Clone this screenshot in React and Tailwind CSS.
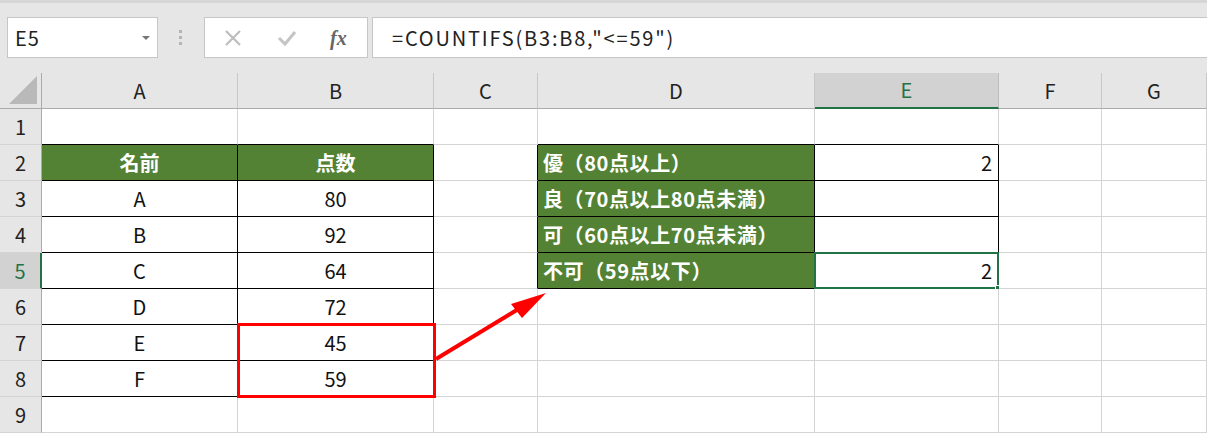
const font = "font-['Noto_Sans_CJK_JP','Noto_Sans',sans-serif]";

const cols = ["A", "B", "C", "D", "E", "F", "G"];

// cell data per row (1-based rows), keyed by column
const data = {
  2: { A: "名前", B: "点数", D: "優（80点以上）", E: "2" },
  3: { A: "A", B: "80", D: "良（70点以上80点未満）" },
  4: { A: "B", B: "92", D: "可（60点以上70点未満）" },
  5: { A: "C", B: "64", D: "不可（59点以下）", E: "2" },
  6: { A: "D", B: "72" },
  7: { A: "E", B: "45" },
  8: { A: "F", B: "59" },
};

function inTable(col, row) {
  if ((col === "A" || col === "B") && row >= 2 && row <= 8) return true;
  if ((col === "D" || col === "E") && row >= 2 && row <= 5) return true;
  return false;
}

function isGreen(col, row) {
  if ((col === "A" || col === "B") && row === 2) return true;
  if (col === "D" && row >= 2 && row <= 5) return true;
  return false;
}

function Cell({ col, row }) {
  const right = cols[cols.indexOf(col) + 1];
  const blackR = inTable(col, row) || (right && inTable(right, row));
  const blackB = inTable(col, row) || inTable(col, row + 1);
  const value = data[row]?.[col] ?? "";
  const green = isGreen(col, row);
  const selected = col === "E" && row === 5;

  let align = "justify-center";
  if (col === "D") align = "justify-start pl-[5px] tracking-[0.6px]";
  if (col === "E") align = "justify-end pr-[6px]";

  return (
    <div
      className={
        "relative flex items-center border-r border-b text-[20px] " +
        align +
        " " +
        (blackR ? "border-r-black" : "border-r-[#d4d4d4]") +
        " " +
        (blackB ? "border-b-black" : "border-b-[#d4d4d4]") +
        " " +
        (green ? "bg-[#548235] font-bold text-white" : "bg-white text-[#111]")
      }
    >
      <span className="whitespace-nowrap leading-none">{value}</span>
      {selected && (
        <>
          <div className="absolute -left-px -top-px -right-px -bottom-px border-2 border-[#217346]" />
          <div className="absolute -right-[4px] -bottom-[4px] h-[7px] w-[7px] border border-white bg-[#217346]" />
        </>
      )}
    </div>
  );
}

function Toolbar() {
  return (
    <div className="flex h-[73px] items-start border-t-[3px] border-[#d6d6d6] bg-[#e6e6e6] pl-[7px] pt-[14px]">
      <div className="flex h-[41px] w-[151px] items-center justify-between border border-[#c6c6c6] bg-white pl-[7px] pr-[7px]">
        <span className="text-[20px] tracking-[1px] text-[#222]">E5</span>
        <span className="h-0 w-0 border-x-[4px] border-t-[4px] border-x-transparent border-t-[#777]" />
      </div>
      <div className="flex h-[41px] w-[46px] flex-col items-center justify-center gap-[3px] pr-[1px]">
        <span className="h-[3px] w-[3px] bg-[#b4b4b4]" />
        <span className="h-[3px] w-[3px] bg-[#b4b4b4]" />
        <span className="h-[3px] w-[3px] bg-[#b4b4b4]" />
      </div>
      <div className="flex h-[41px] w-[164px] items-center border border-[#c6c6c6] bg-white">
        <svg width="20" height="20" viewBox="0 0 20 20" className="ml-[18px]">
          <path d="M3 3 L17 17 M17 3 L3 17" stroke="#bdbdbd" strokeWidth="2.2" fill="none" />
        </svg>
        <svg width="20" height="20" viewBox="0 0 20 20" className="ml-[34px]">
          <path d="M2 10 L8 16 L18 4" stroke="#c4c4c4" strokeWidth="3" fill="none" />
        </svg>
        <span className="ml-[33px] font-['Liberation_Serif',serif] text-[20px] font-bold italic text-[#666]">
          fx
        </span>
      </div>
      <div className="ml-[4px] flex h-[41px] flex-1 items-center border-y border-l border-[#c6c6c6] bg-white pl-[19px]">
        <span className="text-[20px] tracking-[1.8px] text-[#222]">=COUNTIFS(B3:B8,"&lt;=59")</span>
      </div>
    </div>
  );
}

export default function App() {
  const rows = [1, 2, 3, 4, 5, 6, 7, 8, 9];
  return (
    <div className={"relative h-[434px] w-[1207px] overflow-hidden bg-white " + font}>
      <Toolbar />
      <div className="grid grid-cols-[42px_196px_196px_104px_277px_184px_103px_1fr] grid-rows-[36px_repeat(9,36px)]">
        {/* corner */}
        <div className="relative border-r border-b border-[#ababab] bg-[#e6e6e6]">
          <svg className="absolute bottom-[4px] right-[4px]" width="28" height="28" viewBox="0 0 28 28">
            <polygon points="28,0 28,28 0,28" fill="#b9b9b9" />
          </svg>
        </div>
        {cols.map((c) =>
          c === "E" ? (
            <div
              key={c}
              className="flex items-center justify-center border-r border-r-[#bdbdbd] border-b-2 border-b-[#217346] bg-[#d2d2d2] text-[20px] text-[#217346]"
            >
              {c}
            </div>
          ) : (
            <div
              key={c}
              className="flex items-center justify-center border-r border-b border-r-[#c8c8c8] border-b-[#ababab] bg-[#e6e6e6] text-[20px] text-[#222]"
            >
              {c}
            </div>
          )
        )}
        {rows.map((r) => [
          r === 5 ? (
            <div
              key={"h" + r}
              className="flex items-center justify-center border-r-2 border-b border-r-[#217346] border-b-[#d4d4d4] bg-[#d2d2d2] text-[20px] text-[#217346]"
            >
              {r}
            </div>
          ) : (
            <div
              key={"h" + r}
              className="flex items-center justify-center border-r border-b border-r-[#ababab] border-b-[#d4d4d4] bg-[#e6e6e6] text-[20px] text-[#222]"
            >
              {r}
            </div>
          ),
          ...cols.map((c) => <Cell key={c + r} col={c} row={r} />),
        ])}
      </div>
      {/* annotation overlay */}
      <svg className="pointer-events-none absolute left-0 top-0" width="1207" height="434" viewBox="0 0 1207 434">
        <rect x="238.5" y="324.5" width="196" height="72" fill="none" stroke="#ff0000" strokeWidth="3" />
        <line x1="436" y1="359" x2="520" y2="308" stroke="#ff0000" strokeWidth="4" />
        <polygon points="546,293 511,304 522,318" fill="#ff0000" />
      </svg>
    </div>
  );
}
